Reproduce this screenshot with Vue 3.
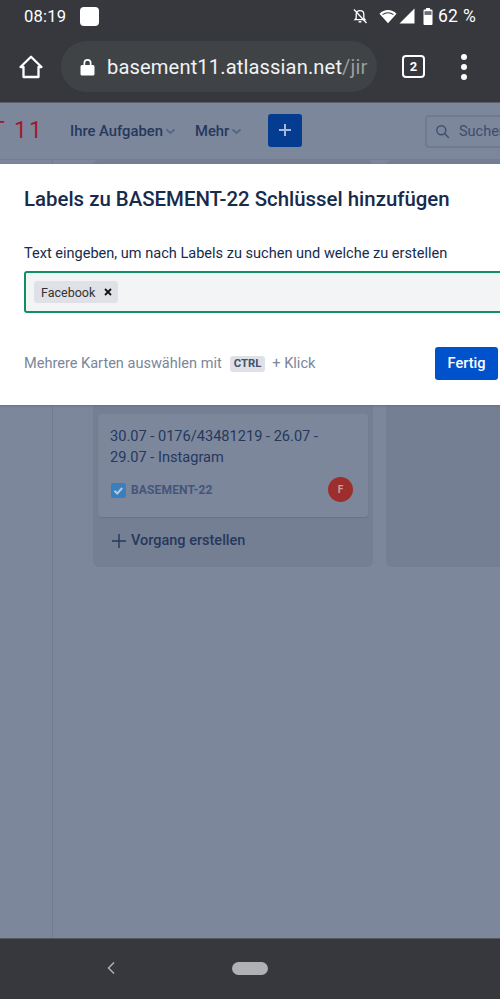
<script setup>
const navItems = ['Ihre Aufgaben', 'Mehr']
</script>

<template>
  <div class="phone">
    <div class="status">
      <span class="time">08:19</span>
      <span class="square"></span>
      <span class="spacer"></span>
      <svg class="bell" width="16" height="16" viewBox="0 0 16 16" fill="none">
        <path d="M4.2 6.2C4.2 4 5.8 2.6 8 2.6s3.800 1.400 3.800 3.600v4l1.200 1.500H3l1.200-1.500z" stroke="#fff" stroke-width="1.300"/>
        <path d="M6.600 13.800h2.800" stroke="#fff" stroke-width="1.500"/>
        <path d="M2 1.500l12.500 13.500" stroke="#fff" stroke-width="1.300"/>
      </svg>
      <svg class="wifi" width="18" height="15" viewBox="0 0 19 15">
        <path d="M0.500 4.500C5.500 -0.500 13.500 -0.500 18.500 4.500L9.500 14.500z" fill="#fff"/>
        <path d="M3.800 5.600C7 2.800 12 2.800 15.200 5.600" stroke="#36383d" stroke-width="1.100" fill="none"/>
      </svg>
      <svg class="signal" width="16" height="16" viewBox="0 0 16 16"><path d="M15.500 0.500V15.500H0.500z" fill="#fff"/></svg>
      <svg class="battery" width="10" height="17" viewBox="0 0 10 16" preserveAspectRatio="none">
        <path d="M3 0h4v1.500h1.500a1 1 0 0 1 1 1V15a1 1 0 0 1-1 1h-7a1 1 0 0 1-1-1V2.500a1 1 0 0 1 1-1H3z" fill="#fff"/>
        <rect x="1.500" y="3" width="7" height="3.500" fill="#6b6d72"/>
      </svg>
      <span class="pct">62 %</span>
    </div>

    <div class="toolbar">
      <svg class="home" width="26" height="26" viewBox="0 0 26 26" fill="none">
        <path d="M2.500 13L13 2.800 23.500 13H20.500V23H5.500V13z" stroke="#fff" stroke-width="2.300" stroke-linejoin="round"/>
      </svg>
      <div class="omnibox">
        <svg width="15" height="18" viewBox="0 0 15 18">
          <path d="M2 7h1.500V5a4 4 0 0 1 8 0v2H13a1.500 1.500 0 0 1 1.500 1.500v7.500a1.500 1.500 0 0 1-1.500 1.500H2A1.500 1.500 0 0 1 .5 16V8.500A1.500 1.500 0 0 1 2 7zM5.200 7h4.600V5a2.300 2.300 0 0 0-4.600 0z" fill="#fff"/>
        </svg>
        <span class="url">basement11.atlassian.net<span class="url-dim">/jir</span></span>
      </div>
      <span class="tabs">2</span>
      <span class="dots"><i></i><i></i><i></i></span>
    </div>

    <div class="page">
      <header class="jira-head">
        <span class="brand">T 11</span>
        <span v-for="item in navItems" :key="item" class="nav-item">
          {{ item }}
          <svg width="11" height="7" viewBox="0 0 11 7" fill="none"><path d="M1.500 1.500l4 3.500 4-3.500" stroke="#56647f" stroke-width="1.700"/></svg>
        </span>
        <span class="plus"><svg width="14" height="14" viewBox="0 0 14 14"><path d="M6 1h2v5h5v2H8v5H6V8H1V6h5z" fill="#a8b8d4"/></svg></span>
        <span class="search">
          <svg width="15" height="15" viewBox="0 0 15 15" fill="none"><circle cx="6.300" cy="6.300" r="4.500" stroke="#3d4f70" stroke-width="1.400"/><path d="M9.800 9.800l4 4" stroke="#3d4f70" stroke-width="1.400"/></svg>
          <span>Suchen</span>
        </span>
      </header>

      <div class="body">
        <aside class="side"></aside>
        <main class="board">
          <section class="column">
            <article class="card">
              <p class="card-title">30.07 - 0176/43481219 - 26.07 - 29.07 - Instagram</p>
              <div class="card-foot">
                <span class="check"><svg width="15" height="15" viewBox="0 0 15 15" fill="none"><path d="M3.500 7.800l2.700 2.700 5-5.500" stroke="#b9c6d8" stroke-width="2"/></svg></span>
                <span class="key">BASEMENT-22</span>
                <span class="avatar">F</span>
              </div>
            </article>
            <div class="create">
              <svg width="14" height="14" viewBox="0 0 14 14"><path d="M6.300 0h1.400v6.300H14v1.400H7.700V14H6.300V7.700H0V6.300h6.300z" fill="#26385c"/></svg>
              <span>Vorgang erstellen</span>
            </div>
          </section>
          <section class="column second"></section>
        </main>
      </div>

      <div class="modal">
        <h1>Labels zu BASEMENT-22 Schlüssel hinzufügen</h1>
        <label>Text eingeben, um nach Labels zu suchen und welche zu erstellen</label>
        <div class="field">
          <span class="tag">Facebook<svg width="8" height="8" viewBox="0 0 8 8"><path d="M1 1l6 6M7 1L1 7" stroke="#111" stroke-width="1.800"/></svg></span>
        </div>
        <div class="foot">
          <span class="hint">Mehrere Karten auswählen mit</span>
          <kbd>CTRL</kbd>
          <span class="hint">+ Klick</span>
          <button>Fertig</button>
        </div>
      </div>
    </div>

    <div class="navbar">
      <svg class="back" width="10" height="14" viewBox="0 0 10 14" fill="none"><path d="M8 1.500L2.500 7 8 12.500" stroke="#b0b1b4" stroke-width="1.500"/></svg>
      <span class="pill"></span>
    </div>
  </div>
</template>

<style>
html, body { margin: 0; background: #36383d; }
</style>

<style scoped>
.phone { width: 500px; height: 999px; display: flex; flex-direction: column; overflow: hidden; font-family: Roboto, "Noto Sans", sans-serif; background: #36383d; }

.status { height: 34px; flex: none; display: flex; align-items: center; padding: 0 24px 2px; box-sizing: border-box; color: #fff; }
.time { font-size: 16.600px; letter-spacing: .2px; }
.square { width: 19px; height: 19px; border-radius: 4px; background: #fff; margin-left: 14px; }
.spacer { flex: 1; }
.bell { margin-right: 11px; }
.wifi { margin-right: 2px; }
.signal { margin-right: 8px; }
.battery { margin-right: 5px; }
.pct { font-size: 17.500px; letter-spacing: .3px; }

.toolbar { height: 68px; flex: none; display: flex; align-items: center; box-sizing: border-box; padding: 0 0 3px 18px; }
.omnibox { width: 316px; height: 51px; margin-left: 17px; border-radius: 26px; background: #3f4346; display: flex; align-items: center; padding-left: 19px; box-sizing: border-box; gap: 12px; flex: none; }
.url { font-size: 20.150px; color: #f1f2f3; letter-spacing: .12px; white-space: nowrap; }
.url-dim { color: #9a9da0; }
.tabs { width: 19px; height: 19px; border: 2.500px solid #fff; border-radius: 4px; margin-left: 25px; color: #fff; font-size: 13px; font-weight: 700; display: flex; align-items: center; justify-content: center; }
.dots { margin-left: 36px; display: flex; flex-direction: column; gap: 4px; }
.dots i { width: 6px; height: 6px; border-radius: 50%; background: #fff; display: block; }

.page { flex: 1; position: relative; overflow: hidden; background: #7c879c; display: flex; flex-direction: column; border-top: 1px solid #5a5f6a; border-bottom: 1px solid #55585f; }
.jira-head { height: 57px; flex: none; display: flex; align-items: center; box-sizing: border-box; border-bottom: 1px solid #737e93; position: relative; }
.brand { font-size: 23px; color: #a3182f; margin-left: -9px; letter-spacing: 2px; width: 79px; flex: none; white-space: nowrap; margin-top: -2px; }
.nav-item { font-size: 14.800px; font-weight: 500; color: #26385c; display: flex; align-items: center; gap: 2px; margin-right: 19px; white-space: nowrap; }
.plus { width: 34px; height: 33px; margin-left: 7px; margin-top: -2px; border-radius: 3px; background: #033c90; display: flex; align-items: center; justify-content: center; }
.search { position: absolute; left: 425px; top: 12px; width: 120px; height: 33px; box-sizing: border-box; border: 2px solid #6f7b92; border-radius: 4px; display: flex; align-items: center; gap: 9px; padding-left: 8px; font-size: 14.500px; color: #3d4c6b; }

.body { flex: 1; display: flex; min-height: 0; }
.side { width: 52px; flex: none; border-right: 1px solid #717c91; }
.board { flex: 1; display: flex; gap: 13px; padding: 0 0 0 40px; align-items: flex-start; overflow: hidden; }
.column { width: 280px; flex: none; height: 407px; border-radius: 6px; background: #747f93; box-sizing: border-box; padding: 254px 5px 0; }
.second { width: 120px; }
.card { height: 103px; box-sizing: border-box; border-radius: 3px; background: #7c879c; box-shadow: 0 1px 1px #6a7488; padding: 12px 12px 0; }
.card-title { margin: 0; width: 240px; font-size: 14.600px; line-height: 21px; color: #26385c; }
.card-foot { display: flex; align-items: center; margin-top: 9px; height: 26px; padding-left: 1px; }
.check { width: 15px; height: 15px; border-radius: 2px; background: #3a7fbd; display: flex; }
.key { font-size: 12.100px; font-weight: 700; color: #45557a; margin-left: 5px; flex: 1; letter-spacing: .1px; }
.avatar { width: 25px; height: 25px; border-radius: 50%; background: #9c2f2e; color: #d29c9c; font-size: 10px; font-weight: 700; display: flex; align-items: center; justify-content: center; margin: -1px 3px 0 0; }
.create { display: flex; align-items: center; gap: 5px; padding: 15px 0 0 14px; font-size: 14.500px; font-weight: 500; color: #26385c; }

.modal { position: absolute; left: 0; top: 61px; width: 500px; height: 241px; box-sizing: border-box; background: #fff; padding: 0 0 0 24px; box-shadow: 0 1px 2px #66708a; overflow: hidden; }
.modal h1 { margin: 0; padding-top: 22px; font-size: 20.400px; line-height: 26px; font-weight: 500; color: #172b4d; white-space: nowrap; }
.modal label { display: block; margin-top: 32px; font-size: 14.550px; line-height: 20px; color: #172b4d; white-space: nowrap; }
.field { margin-top: 7px; width: 490px; height: 42px; box-sizing: border-box; border: 2px solid #0f8f63; border-radius: 3px; background: #f3f4f6; display: flex; align-items: center; padding-left: 8px; }
.tag { height: 22px; border-radius: 3px; background: #dfe1e6; padding: 0 6px 0 7px; display: flex; align-items: center; gap: 9px; font-size: 12.500px; color: #333; }
.foot { display: flex; align-items: center; margin-top: 34px; height: 33px; width: 474px; }
.hint { font-size: 14.550px; color: #7a869a; white-space: nowrap; }
kbd { margin: 1px 7px 0 8px; font-family: Roboto, sans-serif; font-size: 11.300px; font-weight: 700; color: #42526e; background: #dfe1e6; border-radius: 3px; padding: 0 4px; height: 16px; line-height: 16px; }
button { margin-left: auto; width: 63px; height: 33px; border: 0; border-radius: 3px; background: #0052cc; color: #fff; font-family: Roboto, sans-serif; font-weight: 500; font-size: 14.550px; padding: 0; }

.navbar { height: 60px; flex: none; position: relative; display: flex; align-items: center; justify-content: center; }
.back { position: absolute; left: 106px; top: 22px; }
.pill { width: 36px; height: 13px; border-radius: 7px; background: #b0b1b4; margin-top: -1px; }
</style>
